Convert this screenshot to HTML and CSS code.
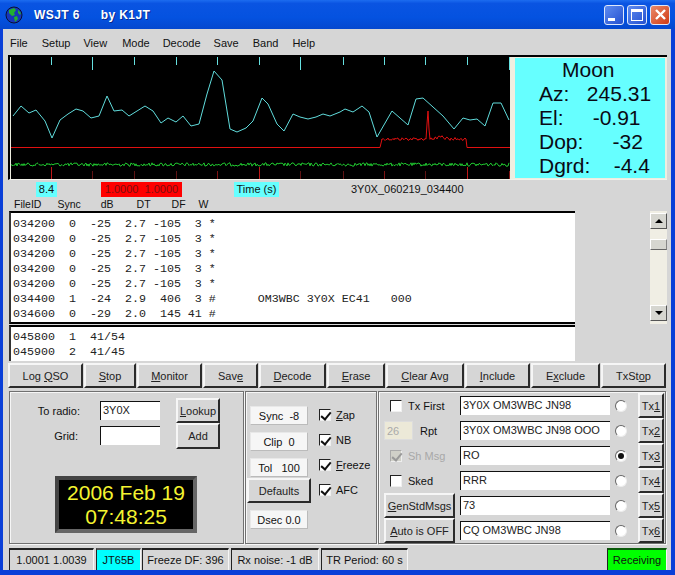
FILE: index.html
```html
<!DOCTYPE html>
<html lang="en">
<head>
    <meta charset="UTF-8">
    <meta name="viewport" content="width=device-width, initial-scale=1.0">
    <title>WSJT 6 by K1JT</title>
    <link rel="stylesheet" href="styles.css">
</head>
<body>
    <div class="window">
        <div class="titlebar">
            <svg class="globe" width="18" height="18" viewBox="0 0 18 18">
                <circle cx="9" cy="9" r="8" fill="#1836b8" stroke="#0a1030"/>
                <path d="M4 4 L9 2 L11 4 L9 7 L10 9 L7 10 L4 7 Z" fill="#22b030"/>
                <path d="M9 11 L12 10 L13 13 L10 16 Z" fill="#22b030"/>
                <path d="M13 4 L16 7 L15 9 L13 7 Z" fill="#22b030"/>
            </svg>
            <span class="title-name">WSJT 6</span>
            <span class="title-by">by K1JT</span>
            <div class="winbtns">
                <div class="winbtn"><span class="min-glyph"></span></div>
                <div class="winbtn"><span class="max-glyph"></span></div>
                <div class="winbtn close">
                    <svg width="13" height="13" viewBox="0 0 13 13"><path d="M2 2 L11 11 M11 2 L2 11" stroke="#fff" stroke-width="2.4"/></svg>
                </div>
            </div>
        </div>

        <div class="client">
            <div class="menu">
                <span class="m-file">File</span>
                <span class="m-setup">Setup</span>
                <span class="m-view">View</span>
                <span class="m-mode">Mode</span>
                <span class="m-decode">Decode</span>
                <span class="m-save">Save</span>
                <span class="m-band">Band</span>
                <span class="m-help">Help</span>
            </div>

            <div class="graph">
                <svg id="plot" class="plot" width="499" height="122" viewBox="11 58 499 122"></svg>
                <div class="moon">
                    <div class="moon-title">Moon</div>
                    <div class="moon-line">Az:   245.31</div>
                    <div class="moon-line">El:     -0.91</div>
                    <div class="moon-line">Dop:     -32</div>
                    <div class="moon-line">Dgrd:    -4.4</div>
                </div>
            </div>

            <div class="chips">
                <span class="chip chip-df">8.4</span>
                <span class="chip chip-red">1.0000&nbsp;&nbsp;1.0000</span>
                <span class="chip chip-time">Time (s)</span>
                <span class="chip-file">3Y0X_060219_034400</span>
            </div>

            <div class="heads">
                <span class="h-file">FileID</span>
                <span class="h-sync">Sync</span>
                <span class="h-db">dB</span>
                <span class="h-dt">DT</span>
                <span class="h-df">DF</span>
                <span class="h-w">W</span>
            </div>

            <div class="log-row">
                <pre class="textbox log-main">034200  0  -25  2.7 -105  3 *
034200  0  -25  2.7 -105  3 *
034200  0  -25  2.7 -105  3 *
034200  0  -25  2.7 -105  3 *
034200  0  -25  2.7 -105  3 *
034400  1  -24  2.9  406  3 #      OM3WBC 3Y0X EC41   000
034600  0  -29  2.0  145 41 #</pre>
                <div class="log-gap"></div>
                <div class="scrollbar">
                    <div class="sb-btn"><span class="arrow-up"></span></div>
                    <div class="sb-thumb"></div>
                    <div class="sb-btn"><span class="arrow-down"></span></div>
                </div>
            </div>

            <div class="log-row">
                <pre class="textbox log-avg">045800  1  41/54
045900  2  41/45</pre>
            </div>

            <div class="actions">
                <button class="btn a-log">Log <u>Q</u>SO</button>
                <button class="btn a-stop"><u>S</u>top</button>
                <button class="btn a-mon"><u>M</u>onitor</button>
                <button class="btn a-save">Sav<u>e</u></button>
                <button class="btn a-dec"><u>D</u>ecode</button>
                <button class="btn a-era"><u>E</u>rase</button>
                <button class="btn a-clr"><u>C</u>lear Avg</button>
                <button class="btn a-inc"><u>I</u>nclude</button>
                <button class="btn a-exc">E<u>x</u>clude</button>
                <button class="btn a-txs">TxSt<u>o</u>p</button>
            </div>

            <div class="panels">
                <div class="panel panel-call">
                    <div class="call-grid">
                        <label class="call-label">To radio:</label>
                        <div class="entry call-entry">3Y0X</div>
                        <button class="btn call-btn"><u>L</u>ookup</button>
                        <label class="call-label call-label-grid">Grid:</label>
                        <div class="entry call-entry"></div>
                        <button class="btn call-btn call-add">Add</button>
                    </div>
                    <div class="clock">2006 Feb 19<br>07:48:25</div>
                </div>

                <div class="panel panel-dsp">
                    <div class="dsp-left">
                        <div class="spin spin-sync">Sync&nbsp;&nbsp;-8</div>
                        <div class="spin">Clip&nbsp;&nbsp;0</div>
                        <div class="spin spin-tol">Tol&nbsp;&nbsp;&nbsp;100</div>
                        <button class="btn dsp-defaults">Defaults</button>
                        <div class="spin spin-dsec">Dsec&nbsp;0.0</div>
                    </div>
                    <div class="dsp-right">
                        <div class="check-row"><span class="check on"></span><span><u>Z</u>ap</span></div>
                        <div class="check-row"><span class="check on"></span><span>NB</span></div>
                        <div class="check-row"><span class="check on"></span><span><u>F</u>reeze</span></div>
                        <div class="check-row"><span class="check on"></span><span>AFC</span></div>
                    </div>
                </div>

                <div class="panel panel-tx">
                    <div class="tx-opt"><span class="check"></span><span>Tx First</span></div>
                    <div class="entry tx-entry">3Y0X OM3WBC JN98</div>
                    <span class="radio"></span>
                    <button class="btn tx-btn">Tx<u>1</u></button>

                    <div class="tx-opt tx-rpt"><div class="rpt-box">26</div><span>Rpt</span></div>
                    <div class="entry tx-entry">3Y0X OM3WBC JN98 OOO</div>
                    <span class="radio"></span>
                    <button class="btn tx-btn">Tx<u>2</u></button>

                    <div class="tx-opt tx-off"><span class="check on off"></span><span>Sh Msg</span></div>
                    <div class="entry tx-entry">RO</div>
                    <span class="radio sel"></span>
                    <button class="btn tx-btn">Tx<u>3</u></button>

                    <div class="tx-opt"><span class="check"></span><span>Sked</span></div>
                    <div class="entry tx-entry">RRR</div>
                    <span class="radio"></span>
                    <button class="btn tx-btn">Tx<u>4</u></button>

                    <button class="btn tx-side"><u>G</u>enStdMsgs</button>
                    <div class="entry tx-entry">73</div>
                    <span class="radio"></span>
                    <button class="btn tx-btn">Tx<u>5</u></button>

                    <button class="btn tx-side"><u>A</u>uto is OFF</button>
                    <div class="entry tx-entry">CQ OM3WBC JN98</div>
                    <span class="radio"></span>
                    <button class="btn tx-btn">Tx<u>6</u></button>
                </div>
            </div>

            <div class="status">
                <div class="cell s-ratio">1.0001 1.0039</div>
                <div class="cell s-mode">JT65B</div>
                <div class="cell s-freeze">Freeze DF: 396</div>
                <div class="cell s-noise">Rx noise: -1 dB</div>
                <div class="cell s-period">TR Period: 60 s</div>
                <div class="s-fill"></div>
                <div class="cell s-rx">Receiving</div>
            </div>
        </div>
    </div>

    <script src="plot.js"></script>
</body>
</html>
```

FILE: styles.css
```css
* {
    box-sizing: border-box;
}
body {
    margin: 0;
    font-family: "Liberation Sans", Arial, sans-serif;
    font-size: 11px;
    color: #111;
    overflow: hidden;
}
.window {
    width: 675px;
    height: 575px;
    display: flex;
    flex-direction: column;
    background: #0a3fd8;
}

/* title bar */
.titlebar {
    height: 30px;
    display: flex;
    align-items: center;
    padding-left: 5px;
    background: linear-gradient(#1c6cf0 0, #0a54e2 12%, #0452e0 60%, #0548cf 100%);
    color: #fff;
    font-size: 12px;
    font-weight: bold;
    text-shadow: 1px 1px #0a2a90;
}
.title-name {
    margin-left: 11px;
    letter-spacing: 0.4px;
}
.title-by {
    margin-left: 21px;
    letter-spacing: 0.4px;
}
.winbtns {
    margin-left: auto;
    display: flex;
    gap: 3px;
    margin-right: 5px;
}
.winbtn {
    width: 20px;
    height: 20px;
    border: 1px solid #dfe8fb;
    border-radius: 3px;
    background: linear-gradient(135deg, #5f8cf0, #2450d0);
    display: flex;
    align-items: center;
    justify-content: center;
    position: relative;
}
.winbtn.close {
    background: linear-gradient(135deg, #ea8a6a, #d03a14);
}
.min-glyph {
    width: 7px;
    height: 3px;
    background: #fff;
    margin: 9px 6px 0 0;
}
.max-glyph {
    width: 12px;
    height: 12px;
    border: 1px solid #fff;
    border-top-width: 3px;
}

.client {
    flex: 1;
    margin: 0 4px 5px 3px;
    background: #d6d6d6;
    padding: 0 4px 0 5px;
    display: flex;
    flex-direction: column;
}

/* menu */
.menu {
    height: 26px;
    display: flex;
    align-items: center;
    padding-top: 1px;
}
.m-file { margin-left: 2px; }
.m-setup { margin-left: 14px; }
.m-view { margin-left: 13px; }
.m-mode { margin-left: 15px; }
.m-decode { margin-left: 13px; }
.m-save { margin-left: 13px; }
.m-band { margin-left: 14px; }
.m-help { margin-left: 14px; }

/* plot and moon */
.graph {
    height: 125px;
    display: flex;
    background: #eeeee0;
    border-top: 2px solid #000;
    border-left: 2px solid #000;
    border-bottom: 1px solid #f2f2ea;
}
.plot {
    display: block;
    margin-left: 1px;
    background: #000;
    flex: none;
}
.moon {
    margin-left: 5px;
    margin-top: 1px;
    width: 150px;
    height: 120px;
    background: #66ffff;
    color: #0a0a14;
    font-size: 21px;
    line-height: 24px;
    padding-left: 24px;
}
.moon-line {
    white-space: pre;
}
.moon-title {
    margin-left: 23px;
}

/* label chips */
.chips {
    height: 17px;
    display: flex;
    align-items: center;
    padding-top: 1px;
}
.chip {
    height: 15px;
    line-height: 15px;
    text-align: center;
}
.chip-df {
    width: 21px;
    margin-left: 28px;
    background: #66ffff;
}
.chip-red {
    width: 81px;
    margin-left: 44px;
    background: #ff0000;
    color: #7a1010;
}
.chip-time {
    width: 45px;
    margin-left: 52px;
    background: #66ffff;
}
.chip-file {
    margin-left: 72px;
}

/* column heads */
.heads {
    height: 14px;
    display: flex;
    align-items: center;
    font-size: 10.5px;
}
.h-file { margin-left: 6px; }
.h-sync { margin-left: 16px; }
.h-db { margin-left: 20px; }
.h-dt { margin-left: 23px; }
.h-df { margin-left: 21px; }
.h-w { margin-left: 13px; }

/* decoded text */
.log-row {
    display: flex;
    margin-left: 1px;
}
.textbox {
    margin: 0;
    width: 566px;
    background: #fff;
    border-top: 2px solid #000;
    border-left: 2px solid #333;
    border-bottom: 2px solid #000;
    padding: 3px 0 0 2px;
    font-family: "Liberation Mono", "Courier New", monospace;
    font-size: 11.67px;
    line-height: 15px;
    color: #222;
}
.log-main {
    height: 113px;
    margin-bottom: 1px;
    padding-top: 4px;
}
.log-avg {
    height: 36px;
    border-bottom: none;
    border-right: none;
}
.log-gap {
    width: 75px;
}
.scrollbar {
    width: 17px;
    height: 113px;
    padding-top: 2px;
    background: #f0eee4;
    display: flex;
    flex-direction: column;
}
.sb-btn {
    height: 16px;
    background: #d6d6d0;
    border-right: 1px solid #555;
    border-bottom: 1px solid #555;
    border-top: 1px solid #fff;
    border-left: 1px solid #fff;
    display: flex;
    align-items: center;
    justify-content: center;
}
.sb-thumb {
    height: 11px;
    margin: 10px 0 55px;
    background: #d6d6d0;
    border-right: 1px solid #888;
    border-bottom: 1px solid #666;
    border-top: 1px solid #fff;
    border-left: 1px solid #fff;
}
.arrow-up, .arrow-down {
    width: 0;
    height: 0;
    border-left: 4px solid transparent;
    border-right: 4px solid transparent;
}
.arrow-up {
    border-bottom: 4px solid #000;
}
.arrow-down {
    border-top: 4px solid #000;
}

/* buttons */
.btn {
    padding: 0;
    font: inherit;
    color: #222;
    background: #d6d6d6;
    border: 2px solid;
    border-color: #f6f6f6 #2a2a2a #2a2a2a #f6f6f6;
}
.actions {
    margin-top: 2px;
    height: 25px;
    display: flex;
    gap: 1px;
    flex: none;
}
.a-log { width: 75px; }
.a-stop { width: 52px; }
.a-mon { width: 65px; }
.a-save { width: 55px; }
.a-dec { width: 67px; }
.a-era { width: 58px; }
.a-clr { width: 78px; }
.a-inc { width: 65px; }
.a-exc { width: 69px; }
.a-txs { width: 65px; }

/* lower panels */
.panels {
    margin: 3px 0 0 1px;
    height: 153px;
    display: flex;
    gap: 1px;
    flex: none;
}
.panel {
    border: 1px solid #707070;
    box-shadow: inset 1px 1px #f6f6f6, 1px 1px #f6f6f6;
}
.panel-call {
    width: 235px;
    display: flex;
    flex-direction: column;
    align-items: flex-start;
}
.call-grid {
    margin-top: 6px;
    display: grid;
    grid-template-columns: 90px 60px 44px;
    grid-auto-rows: 25px;
    align-items: center;
}
.call-label {
    text-align: right;
    padding-right: 20px;
}
.call-label-grid {
    padding-right: 22px;
}
.entry {
    height: 19px;
    line-height: 17px;
    background: #fff;
    border-top: 1px solid #111;
    border-left: 1px solid #111;
    padding-left: 2px;
    color: #222;
}
.call-entry {
    width: 60px;
}
.call-btn {
    width: 44px;
    height: 25px;
    margin-left: 16px;
}
.call-add {
    height: 26px;
    margin-top: 1px;
}
.clock {
    margin: 28px 0 0 45px;
    width: 142px;
    height: 57px;
    border: 4px solid;
    border-color: #444 #666 #666 #444;
    background: #000;
    color: #f4f430;
    font-size: 21px;
    line-height: 24px;
    text-align: center;
    padding-top: 1px;
}
.panel-dsp {
    width: 132px;
    display: flex;
    padding: 14px 0 0 1px;
}
.dsp-left {
    width: 64px;
    display: flex;
    flex-direction: column;
    align-items: center;
}
.spin {
    width: 58px;
    height: 19px;
    line-height: 18px;
    margin-bottom: 7px;
    text-align: center;
    background: #f6f6f6;
    border: 1px solid #e8e8e8;
    border-right-color: #bbb;
    border-bottom-color: #bbb;
}
.spin-tol {
    margin-bottom: 1px;
}
.dsp-defaults {
    width: 64px;
    height: 25px;
    margin-bottom: 7px;
    flex: none;
}
.spin-dsec {
    margin-bottom: 0;
}
.dsp-right {
    padding: 3px 0 0 8px;
    display: flex;
    flex-direction: column;
    gap: 13px;
}
.check-row {
    display: flex;
    align-items: center;
    gap: 5px;
    height: 12px;
}
.check {
    display: block;
    width: 12px;
    height: 12px;
    flex: none;
    background: #fff;
    border-top: 1px solid #222;
    border-left: 1px solid #222;
    border-right: 1px solid #f0f0f0;
    border-bottom: 1px solid #f0f0f0;
    position: relative;
}
.check.on::after {
    content: "";
    position: absolute;
    left: 3px;
    top: 0;
    width: 4px;
    height: 8px;
    border: solid #111;
    border-width: 0 2px 2px 0;
    transform: rotate(40deg);
}
.check.off {
    background: #d0d0c8;
    border-color: #aaa #eee #eee #aaa;
}
.check.off::after {
    border-color: #999;
}

/* transmit grid */
.panel-tx {
    width: 288px;
    display: grid;
    grid-template-columns: 76px 150px 28px 27px;
    grid-auto-rows: 25px;
    align-items: center;
    padding: 1px 0 0 5px;
}
.tx-opt {
    display: flex;
    align-items: center;
    gap: 6px;
    padding-left: 6px;
}
.tx-rpt {
    padding-left: 0;
    gap: 7px;
}
.rpt-box {
    width: 29px;
    height: 19px;
    line-height: 18px;
    padding-left: 2px;
    color: #aaa;
    background: #ece9d8;
    border: 1px solid #ddd;
}
.tx-off {
    color: #a8a8a8;
}
.tx-entry {
    width: 150px;
}
.radio {
    justify-self: start;
    margin-left: 5px;
    width: 12px;
    height: 12px;
    border-radius: 50%;
    background: #fff;
    border: 1px solid;
    border-color: #666 #eee #eee #666;
    position: relative;
}
.radio.sel::after {
    content: "";
    position: absolute;
    left: 2px;
    top: 2px;
    width: 6px;
    height: 6px;
    border-radius: 50%;
    background: #111;
}
.tx-btn {
    width: 26px;
    height: 25px;
}
.tx-side {
    width: 71px;
    height: 25px;
}

/* status bar */
.status {
    margin: 2px 0 0 1px;
    height: 24px;
    display: flex;
    gap: 2px;
    align-items: flex-end;
    flex: none;
}
.cell {
    height: 22px;
    line-height: 21px;
    text-align: center;
    border-top: 2px solid #222;
    border-left: 1px solid #222;
    border-right: 1px solid #f6f6f6;
}
.s-ratio { width: 85px; }
.s-mode { width: 45px; background: #00ffff; border-top-color: #555; }
.s-freeze { width: 87px; margin-left: -1px; }
.s-noise { width: 88px; }
.s-period { width: 87px; }
.s-fill { flex: 1; }
.s-rx {
    width: 60px;
    background: #00ff00;
    border-top-color: #0a5a0a;
}
```

FILE: plot.js
```js
const plot = document.getElementById('plot');
const SVG_NS = 'http://www.w3.org/2000/svg';

const cyanTrace = [
    13,117, 21,107, 29,114, 36,111, 45,122, 52,139, 60,121, 68,115, 76,110, 83,112,
    91,119, 99,117, 107,97, 114,112, 122,111, 129,117, 137,112, 145,107, 153,112, 161,124,
    168,119, 176,123, 183,117, 191,127, 199,125, 207,95, 214,72, 222,81, 230,130, 237,133,
    246,129, 253,122, 262,99, 268,105, 277,125, 284,132, 293,115, 300,118, 308,120, 316,118,
    323,115, 330,117, 340,113, 345,110, 353,113, 362,107, 369,113, 377,138, 392,112, 408,126,
    416,100, 423,99, 443,117, 454,130, 463,119, 470,121, 477,120, 485,127, 493,104, 501,104,
    509,121
];
const topTicks = [[51, 66], [92, 71], [134, 66], [176, 66], [217, 66], [259, 66], [300, 71],
    [343, 66], [384, 66], [425, 66], [467, 66], [509, 71]];
const lowTicks = [[51, 168, '#c01818'], [92, 172, '#601414'], [134, 172, '#601414'], [176, 172, '#601414'],
    [217, 172, '#801414'], [259, 168, '#c01818'], [300, 172, '#601414'], [343, 172, '#601414'],
    [384, 172, '#801414'], [425, 172, '#601414'], [467, 168, '#c01818'], [509, 172, '#801414']];

// fixed seed so the noise is the same on every load
let seed = 12345;
function rand() {
    seed = (seed * 1103515245 + 12345) % 2147483648;
    return seed / 2147483648;
}

function addLine(points, color) {
    const line = document.createElementNS(SVG_NS, 'polyline');
    line.setAttribute('points', points.join(' '));
    line.setAttribute('fill', 'none');
    line.setAttribute('stroke', color);
    line.setAttribute('stroke-width', '1');
    plot.appendChild(line);
}

function addTick(x, y1, y2, color) {
    addLine([x + 0.5, y1, x + 0.5, y2], color);
}

function redTrace() {
    const points = [11, 148.5, 380, 148.5, 382, 140];
    for (let x = 382; x < 466; x++) {
        let y = 140 + (rand() - 0.5) * 3;
        if (x > 434 && x < 448) y -= rand() * 3;
        if (x === 427) y = 125;
        if (x === 428) y = 112;
        if (x === 429) y = 130;
        points.push(x, y.toFixed(1));
    }
    points.push(466, 140, 467, 148.5, 510, 148.5);
    return points;
}

function greenTrace() {
    const points = [];
    for (let x = 11; x < 510; x++) {
        points.push(x, (165.5 + (rand() - 0.5) * 3.5).toFixed(1));
    }
    return points;
}

topTicks.forEach(t => addTick(t[0], 58, t[1], '#66e0e0'));
lowTicks.forEach(t => addTick(t[0], t[1], 180, t[2]));
addLine(redTrace(), '#e01010');
addLine(greenTrace(), '#20c830');
addLine(cyanTrace, '#60dcdc');
```
